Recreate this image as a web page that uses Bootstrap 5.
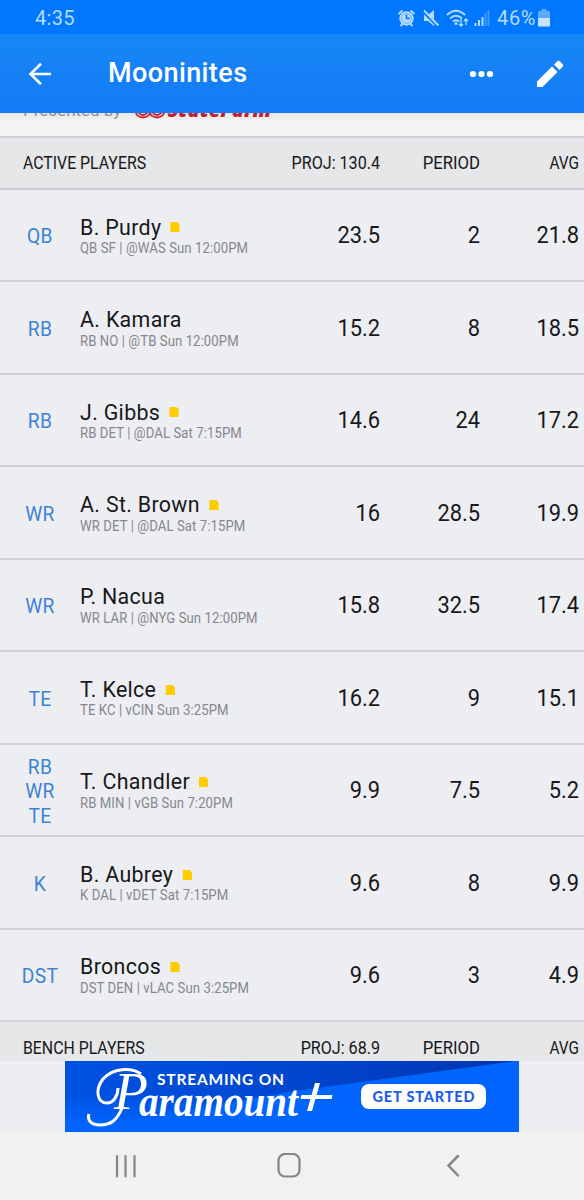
<!DOCTYPE html>
<html lang="en">
<head>
<meta charset="utf-8">
<meta name="viewport" content="width=device-width, initial-scale=1">
<title>Mooninites</title>
<link href="https://cdn.jsdelivr.net/npm/bootstrap@5.3.0/dist/css/bootstrap.min.css" rel="stylesheet">
<style>
  body { font-family: Roboto, "Liberation Sans", sans-serif; background: #edeef2; color: #17181a; height: 1200px; overflow: hidden; }
  svg { display: block; flex: none; }
  .status { height: 34px; background: #0077ff; color: #b5dcff; font-size: 20px; padding: 2px 33px 0 35px; }
  .clock { letter-spacing: .3px; }
  .charge { letter-spacing: .6px; margin-right: 1px; }
  .appbar { height: 79px; background: linear-gradient(#1787f6, #147af6); color: #fff; padding: 0 20px 0 27px; }
  .appbar h1 { font-size: 27px; font-weight: 500; margin: 0 0 1px 55px; letter-spacing: .4px; line-height: 1; }
  .edit-icon { margin-left: 41px; }
  .sponsor { height: 23px; background: linear-gradient(#e7e8ea, #f3f4f6 9px); padding-left: 23px; font-size: 17px; color: #8d9095; line-height: 20px; }
  .sponsor > * { margin-top: -13px; }
  .sponsor svg { margin-left: 14px; }
  .farm { color: #c81e2c; font-family: "Open Sans", sans-serif; font-weight: 800; font-style: italic; font-size: 20px; }
  .section-head { background: #e6e7e9; height: 54px; border-top: 2px solid #cfd0d3; border-bottom: 2px solid #cbccd0; font-size: 17.5px; padding: 1px 5px 0 23px; }
  .section-head.bench { height: 40px; border-bottom: 0; border-top: 0; padding-top: 13px; }
  .player { height: 92.45px; border-bottom: 2px solid #d0d1d5; padding: 3px 5px 0 10px; }
  .slot { width: 60px; flex: none; color: #3d83d3; font-size: 20px; line-height: 24.5px; letter-spacing: .4px; transform: scaleX(.96); }
  .who { width: 190px; margin-left: 10px; }
  .pname { font-size: 22.5px; line-height: 25.5px; letter-spacing: .35px; }
  .pname svg { margin-left: 9.5px; }
  .game { font-size: 14.5px; line-height: 18.5px; color: #85878c; letter-spacing: .1px; }
  /* The interface face is slightly condensed */
  .squeeze { transform: scaleX(.95); transform-origin: left; }
  .game.squeeze { transform: scaleX(.905); }
  .section-head > :first-child { transform: scaleX(.905); transform-origin: left; }
  .proj, .period, .avg { flex: none; text-align: right; transform: scaleX(.92); transform-origin: right; }
  .proj { width: 100px; } .period { width: 100px; } .avg { width: 99px; }
  .section-head .avg { transform: scaleX(.88); }
  .section-head .period { transform: scaleX(.955); }
  .stat { font-size: 23px; }
  .stat.proj, .stat.period, .stat.avg { transform: scaleX(.95); }
  .ad-slot { height: 71px; }
  .ad { width: 454px; }
  .softkeys { height: 68px; background: #f1f1f2; padding: 0 123px 0 114px; }
  .home-key { margin-left: 139px; }
</style>
</head>
<body class="d-flex flex-column">
<header>
  <div class="status d-flex align-items-center justify-content-between">
    <span class="clock">4:35</span>
    <div class="d-flex align-items-center">
      <svg width="100" height="24" viewBox="396 5 100 24" fill="none" stroke="#b5dcff">
        <circle cx="405.500" cy="17.500" r="7.200" fill="#b5dcff" stroke="none"/>
        <circle cx="405.500" cy="17.500" r="5" stroke="#4ea6ff" stroke-width=".7"/>
        <path d="M405.500 13.500v4h3.500" stroke="#0877f5" stroke-width="1.600"/>
        <path d="M397.500 13l4-3.500M413.500 13l-4-3.500M399.500 25l2-2M411.500 25l-2-2" stroke-width="2"/>
        <path d="M423 14h4l6-5v16l-6-5h-4z" fill="#b5dcff" stroke="none"/>
        <path d="M422 10.500l15 15" stroke="#0877f5" stroke-width="2.500"/>
        <path d="M423 9.500l14.500 15" stroke-width="1.800"/>
        <path d="M446 14q9-8.500 18 0M449 17.500q6-5.500 12 0M452 20.500q3-2.500 6 0" stroke-width="2"/>
        <circle cx="455" cy="22.500" r="1.500" fill="#b5dcff" stroke="none"/>
        <path d="M460 18v7m-2-2l2 2 2-2M465 24v-6m-2 2l2-2 2 2" stroke-width="1.300"/>
        <path d="M474.500 25v-3M478 25v-6M481.500 25v-9" stroke-width="2"/>
        <path d="M484.500 25V12M487.500 25V9" stroke-width="2" opacity=".35"/>
      </svg>
      <span class="charge">46%</span>
      <svg width="14" height="20" viewBox="-1 0 14 20"><path d="M3.500 1h5v2H11q1 0 1 1v6H0V4q0-1 1-1h2.500z" fill="#5faaff"/><path d="M0 10h12v7.500q0 1-1 1H1q-1 0-1-1z" fill="#c5e3ff"/></svg>
    </div>
  </div>
  <nav class="appbar d-flex align-items-center">
    <svg width="26" height="24" viewBox="0 0 26 24" fill="none" stroke="#fff" stroke-width="2.600"><path d="M24 12H4M14 1.700L3.500 12 14 22.300"/></svg>
    <h1>Mooninites</h1>
    <svg class="ms-auto" width="26" height="8" viewBox="0 0 26 8" fill="#fff"><circle cx="4" cy="4" r="3.100"/><circle cx="12.500" cy="4" r="3.100"/><circle cx="21" cy="4" r="3.100"/></svg>
    <svg class="edit-icon" width="28" height="28" viewBox="0 0 28 28" fill="#fff"><path d="M1 21.500L16 6.500 21.500 12 6.500 27H1zM18 4.500l3-3q1.500-1.500 3 0L26.500 4q1.500 1.500 0 3l-3 3z"/></svg>
  </nav>
</header>

<main class="flex-fill overflow-hidden">
  <div class="sponsor d-flex overflow-hidden">
    <span>Presented by</span>
    <svg width="32" height="20" viewBox="0 0 32 20" fill="none" stroke="#c81e2c" stroke-width="1.800"><ellipse cx="8" cy="12" rx="7" ry="5.500"/><ellipse cx="22" cy="12" rx="7" ry="5.500"/><ellipse cx="8" cy="12" rx="4" ry="3"/><ellipse cx="22" cy="12" rx="4" ry="3"/></svg>
    <span class="farm">StateFarm</span>
  </div>
  <div class="section-head d-flex align-items-center">
    <span class="me-auto">ACTIVE PLAYERS</span><span class="proj text-nowrap">PROJ: 130.4</span><span class="period">PERIOD</span><span class="avg">AVG</span>
  </div>
  <div id="roster"></div>
  <div class="section-head bench d-flex align-items-center">
    <span class="me-auto">BENCH PLAYERS</span><span class="proj text-nowrap">PROJ: 68.9</span><span class="period">PERIOD</span><span class="avg">AVG</span>
  </div>
</main>

<div class="ad-slot d-flex justify-content-center">
  <svg class="ad" height="71" viewBox="0 0 454 71">
    <defs>
      <linearGradient id="deep" x1="0" y1="0" x2="1" y2="0"><stop offset="0" stop-color="#0052e2"/><stop offset=".5" stop-color="#0046cf"/><stop offset="1" stop-color="#0036b0"/></linearGradient>
      <linearGradient id="glow" x1="0" y1="0" x2="0" y2="1"><stop offset=".45" stop-color="#0064ff" stop-opacity="0"/><stop offset=".9" stop-color="#0064ff"/></linearGradient>
    </defs>
    <path fill="#0064ff" d="M0 0h454v71H0z"/>
    <path fill="url(#deep)" d="M0 0h450L230 30 0 71z"/>
    <path fill="url(#glow)" d="M0 0h300v71H0z"/>
    <g fill="#fff">
      <text x="92" y="23.500" font-family="Lato" font-weight="700" font-size="15.500" textLength="127">STREAMING ON</text>
      <text x="49" y="48" font-family="Liberation Serif" font-style="italic" font-size="53" textLength="34" lengthAdjust="spacingAndGlyphs">P</text>
      <text x="74" y="55" font-family="Liberation Serif" font-style="italic" font-weight="700" font-size="44" textLength="159" lengthAdjust="spacingAndGlyphs">aramount</text>
      <path d="M236.500 34h31l-1 4h-31zM250 22h5l-8 28h-5z"/>
      <rect x="296" y="23" width="125" height="25" rx="8"/>
    </g>
    <path d="M76 13C66 6 48 7 38 18 29 30 33 42 42 42 49 42 53 34 53 27M57 47C52 59 46 64 35 64 26 64 22 59 24 53" fill="none" stroke="#fff" stroke-width="3"/>
    <text x="307.500" y="41" fill="#1d5fe8" font-family="Lato" font-weight="900" font-size="14.500" textLength="102">GET STARTED</text>
  </svg>
</div>
<nav class="softkeys d-flex align-items-center">
  <svg width="24" height="26" viewBox="0 0 24 26" stroke="#85858a" stroke-width="2.200" stroke-linecap="round"><path d="M3 3v20.500M11.500 3v20.500M20.500 3v20.500"/></svg>
  <svg class="home-key" width="26" height="26" viewBox="0 0 26 26" fill="none" stroke="#85858a" stroke-width="2.200"><rect x="1.500" y="1" width="21" height="22.500" rx="6.500"/></svg>
  <svg class="ms-auto" width="16" height="26" viewBox="0 0 16 26" fill="none" stroke="#85858a" stroke-width="2.500" stroke-linecap="round"><path d="M13 3L3.500 12.500l9.500 10"/></svg>
</nav>

<script src="https://cdn.jsdelivr.net/npm/bootstrap@5.3.0/dist/js/bootstrap.bundle.min.js"></script>
<script>
  // slot, name, has news note, game line, projection, period, average
  const players = [
    ['QB', 'B. Purdy', 1, 'QB SF | @WAS Sun 12:00PM', '23.5', '2', '21.8'],
    ['RB', 'A. Kamara', 0, 'RB NO | @TB Sun 12:00PM', '15.2', '8', '18.5'],
    ['RB', 'J. Gibbs', 1, 'RB DET | @DAL Sat 7:15PM', '14.6', '24', '17.2'],
    ['WR', 'A. St. Brown', 1, 'WR DET | @DAL Sat 7:15PM', '16', '28.5', '19.9'],
    ['WR', 'P. Nacua', 0, 'WR LAR | @NYG Sun 12:00PM', '15.8', '32.5', '17.4'],
    ['TE', 'T. Kelce', 1, 'TE KC | vCIN Sun 3:25PM', '16.2', '9', '15.1'],
    ['RB<br>WR<br>TE', 'T. Chandler', 1, 'RB MIN | vGB Sun 7:20PM', '9.9', '7.5', '5.2'],
    ['K', 'B. Aubrey', 1, 'K DAL | vDET Sat 7:15PM', '9.6', '8', '9.9'],
    ['DST', 'Broncos', 1, 'DST DEN | vLAC Sun 3:25PM', '9.6', '3', '4.9']
  ];
  const note = '<svg width="10" height="10" viewBox="0 0 10 10"><path d="M0 0h7.500L10 2.500V10H0z" fill="#fc0"/></svg>';
  document.getElementById('roster').innerHTML = players.map(([slot, name, news, game, proj, period, avg]) => `
    <div class="player d-flex align-items-center">
      <div class="slot text-center">${slot}</div>
      <div class="who me-auto text-nowrap">
        <div class="pname squeeze d-flex align-items-center">${name}${news ? note : ''}</div>
        <div class="game squeeze">${game}</div>
      </div>
      <div class="stat proj">${proj}</div><div class="stat period">${period}</div><div class="stat avg">${avg}</div>
    </div>`).join('');
</script>
</body>
</html>
